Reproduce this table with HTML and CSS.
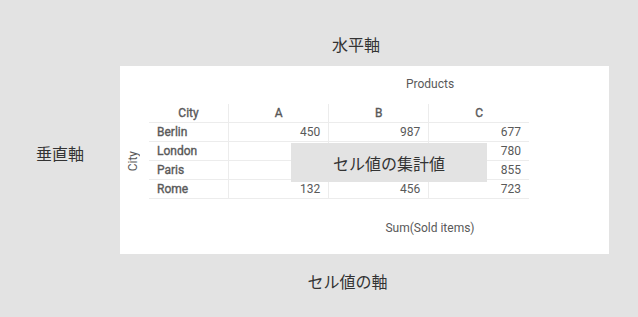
FILE: index.html
```html
<!DOCTYPE html>
<html lang="ja">
<head>
<meta charset="utf-8">
<link rel="stylesheet" href="styles.css">
</head>
<body>
<div class="layout">
  <div class="top-label">水平軸</div>
  <div class="left-label">垂直軸</div>
  <div class="panel">
    <div class="dim-title">Products</div>
    <div class="middle">
      <div class="row-title"><span>City</span></div>
      <div class="table-wrap">
        <table class="pivot">
          <thead>
            <tr><th class="c-city">City</th><th>A</th><th>B</th><th>C</th></tr>
          </thead>
          <tbody>
            <tr><td class="name">Berlin</td><td>450</td><td>987</td><td>677</td></tr>
            <tr><td class="name">London</td><td></td><td></td><td>780</td></tr>
            <tr><td class="name">Paris</td><td></td><td></td><td>855</td></tr>
            <tr><td class="name">Rome</td><td>132</td><td>456</td><td>723</td></tr>
          </tbody>
        </table>
        <div class="overlay">セル値の集計値</div>
      </div>
    </div>
    <div class="measure">Sum(Sold items)</div>
  </div>
  <div class="bottom-label">セル値の軸</div>
</div>
</body>
</html>
```
FILE: styles.css
```css
html, body {
  margin: 0;
  padding: 0;
  background: #e3e3e3;
}
body {
  width: 638px;
  height: 317px;
  overflow: hidden;
  font-family: "Noto Sans CJK JP", "Noto Sans", sans-serif;
}
.layout {
  display: grid;
  grid-template-columns: 120px 489px;
  grid-template-rows: 66px 188px auto;
}
.top-label, .left-label, .bottom-label {
  font-size: 16px;
  line-height: 22px;
  color: #333333;
}
.top-label {
  grid-column: 2;
  grid-row: 1;
  align-self: end;
  text-align: center;
  padding-right: 17px;
  padding-bottom: 11px;
}
.left-label {
  grid-column: 1;
  grid-row: 2;
  align-self: center;
  text-align: center;
  padding-bottom: 14px;
}
.bottom-label {
  grid-column: 2;
  grid-row: 3;
  text-align: center;
  padding-right: 34px;
  padding-top: 16px;
}
.panel {
  grid-column: 2;
  grid-row: 2;
  background: #ffffff;
  display: flex;
  flex-direction: column;
  padding-top: 10px;
  font-family: Roboto, "Liberation Sans", sans-serif;
  color: #595959;
  font-size: 12px;
}
.dim-title, .measure {
  line-height: 16px;
  text-align: center;
  padding-left: 131px;
}
.dim-title {
  margin-bottom: 12px;
}
.measure {
  margin-top: 21px;
}
.middle {
  display: flex;
  align-items: stretch;
}
.row-title {
  width: 26px;
  padding-right: 3px;
  display: flex;
  align-items: center;
  justify-content: center;
  padding-top: 19px;
}
.row-title span {
  writing-mode: vertical-rl;
  transform: rotate(180deg);
  line-height: 14px;
}
.table-wrap {
  position: relative;
}
.pivot {
  border-collapse: collapse;
  table-layout: fixed;
  width: 380px;
}
.pivot th, .pivot td {
  height: 18px;
  padding: 0 8px;
  line-height: 18px;
  font-size: 12px;
  border-bottom: 1px solid #ececec;
  white-space: nowrap;
}
.pivot th {
  font-weight: 400;
  -webkit-text-stroke: 0.35px currentColor;
  text-align: center;
  border-left: 1px solid #ececec;
}
.pivot th.c-city {
  border-left: none;
  width: 63px;
}
.pivot td {
  text-align: right;
  border-left: 1px solid #ececec;
}
.pivot td.name {
  text-align: left;
  font-weight: 400;
  -webkit-text-stroke: 0.35px currentColor;
  border-left: none;
}
.overlay {
  position: absolute;
  left: 142px;
  top: 39px;
  width: 196px;
  height: 39px;
  background: #e3e3e3;
  color: #333333;
  font-family: "Noto Sans CJK JP", sans-serif;
  font-size: 16px;
  display: flex;
  align-items: center;
  justify-content: center;
}
```
